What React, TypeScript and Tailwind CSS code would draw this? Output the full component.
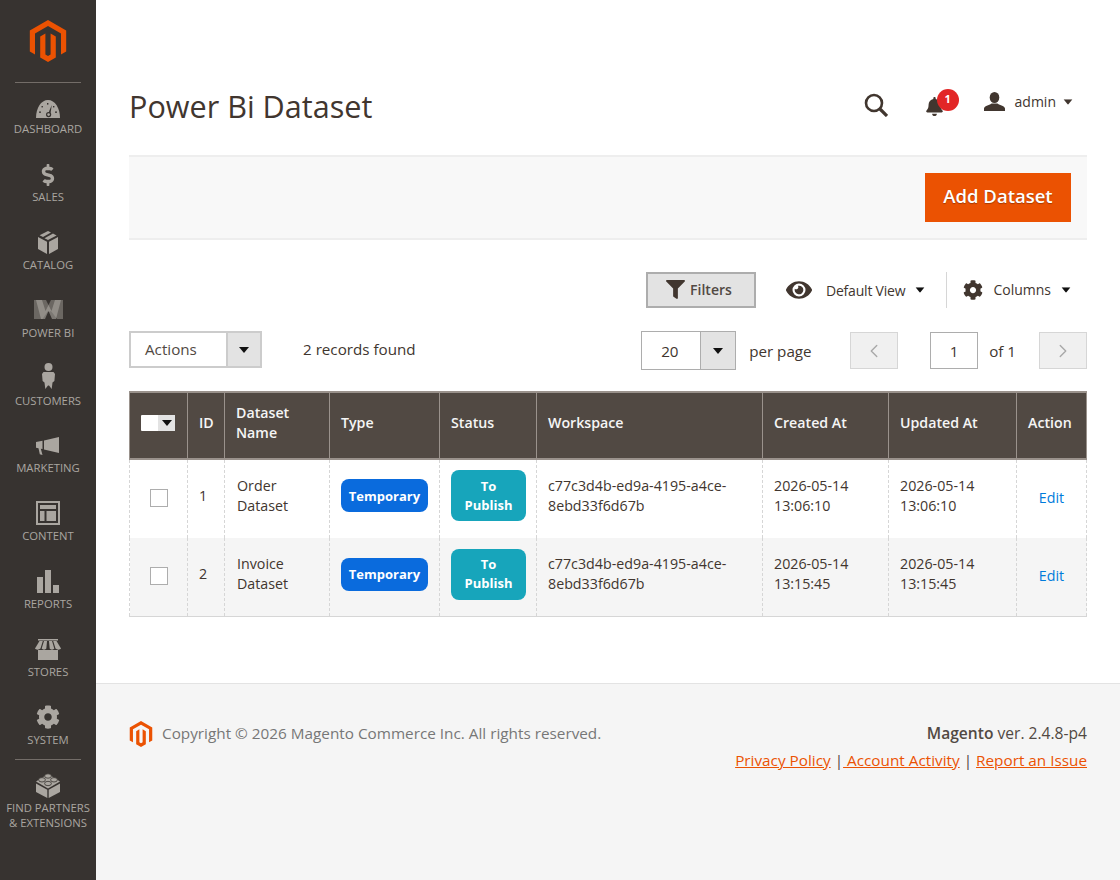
import React from 'react';
import { SiMagento } from 'react-icons/si';
import { FaDollarSign, FaCog, FaFilter, FaEye, FaBell } from 'react-icons/fa';
import { ChevronLeft, ChevronRight } from 'lucide-react';

const Caret = ({ className = '' }: { className?: string }) => (
  <svg viewBox="0 0 10 6" className={`h-[6px] w-[10px] ${className}`} fill="currentColor">
    <path d="M0 0h10L5 6z" />
  </svg>
);

const GaugeIcon = () => (
  <svg viewBox="0 0 24 18" className="h-[18px] w-[24px]">
    <path d="M0 18C0 8 5 0 12 0s12 8 12 18z" fill="currentColor" />
    <path d="M12 17l1.2-6 2.6-6-1 6.4-.8 5.6z" fill="#373330" />
    <circle cx="12.6" cy="14.6" r="2.6" fill="#373330" />
    <circle cx="12.6" cy="14.6" r="1.3" fill="currentColor" />
    <g fill="#373330">
      <rect x="3" y="11.5" width="2" height="1.3" />
      <rect x="19" y="11.5" width="2" height="1.3" />
      <rect x="5.5" y="6" width="1.4" height="1.4" />
      <rect x="11" y="3" width="1.4" height="1.6" />
      <rect x="17" y="6" width="1.4" height="1.4" />
    </g>
  </svg>
);

const BoxIcon = () => (
  <svg viewBox="0 0 20 23" className="h-[23px] w-[20px]" fill="currentColor">
    <path d="M10 0l3 1.6-8 4.4-3.4-1.7z" />
    <path d="M15 2.6l3.6 1.9-8.6 4.6-3.5-1.9z" />
    <path d="M0 6l9 4.8V23L0 18z" />
    <path d="M20 6v12l-9 5V10.800z" />
  </svg>
);

const PowerBiIcon = () => (
  <svg viewBox="0 0 29 19" className="h-[19px] w-[29px]" fill="currentColor">
    <path d="M0 0h12l2.500 5 2.500-5h12v19h-6l-6-8-2 1-1-1-5.500 8H0z" opacity="0.45" />
    <path d="M2 0h6l3.500 11 3-6 3 6L21 0h6l-5 19h-4l-3.500-8L11 19H7z" opacity="0.6" />
  </svg>
);

const PersonIcon = () => (
  <svg viewBox="0 0 13 26" className="h-[26px] w-[13px]" fill="currentColor">
    <circle cx="6.500" cy="4" r="4" />
    <path d="M1.500 9h10l1.500 2-.6 7-1.900 1.500-.8 6.500-2.700-3.500h-1l-2.700 3.500-.8-6.500L.600 18 0 11z" />
  </svg>
);

const MegaphoneIcon = () => (
  <svg viewBox="0 0 24 18" className="h-[18px] w-[24px]" fill="currentColor">
    <path d="M23 0v16L8 12.500V3.500z" />
    <path d="M0 5l6.500-1.300v8.300L4.800 11.700 6.500 18 3.800 17.300 2.500 11.200 0 10.700z" />
  </svg>
);

const ContentIcon = () => (
  <svg viewBox="0 0 24 24" className="h-[24px] w-[24px]" fill="currentColor">
    <path fillRule="evenodd" d="M0 0h24v24H0zM2 2v20h20V2z" />
    <rect x="4" y="4" width="16" height="4" />
    <rect x="4" y="10" width="4.500" height="10" />
    <rect x="10.500" y="10" width="9.500" height="10" />
  </svg>
);

const ReportsIcon = () => (
  <svg viewBox="0 0 22 23" className="h-[23px] w-[22px]" fill="currentColor">
    <rect x="0" y="7" width="6" height="16" />
    <rect x="8" y="0" width="6" height="23" />
    <rect x="16" y="15" width="6" height="8" />
  </svg>
);

const StoreIcon = () => (
  <svg viewBox="0 0 26 21" className="h-[21px] w-[26px]" fill="currentColor">
    <path d="M3 11h20v10H3z" />
    <path d="M3 0h20v1.500H3z" />
    <path d="M4.500 2h3.300L5.500 9.500C4 11 1 11 0 9.500z" />
    <path d="M9 2h3l-.7 7.500c-1 1.500-3.600 1.500-4.600 0z" />
    <path d="M14 2h3l2.300 7.500c-1 1.500-3.600 1.500-4.600 0z" />
    <path d="M18.200 2h3.300L26 9.500c-1 1.500-4 1.500-5.500 0z" />
  </svg>
);

const LegoIcon = () => (
  <svg viewBox="0 0 24 25" className="h-[25px] w-[24px]" fill="currentColor">
    <path d="M12 1l12 7.500-12 7-12-7z" />
    <path d="M0 10.500l11.300 6.300V25L0 19z" />
    <path d="M24 10.500v8.500l-11.300 6v-8.200z" />
    <g stroke="#373330" strokeWidth="0.8">
      <ellipse cx="12" cy="3" rx="3.400" ry="2.200" />
      <ellipse cx="6" cy="6.800" rx="3.400" ry="2.200" />
      <ellipse cx="18" cy="6.800" rx="3.400" ry="2.200" />
      <ellipse cx="12" cy="10.500" rx="3.400" ry="2.200" />
    </g>
  </svg>
);

const UserIcon = () => (
  <svg viewBox="0 0 21 19" className="h-[19px] w-[21px] text-[#41362f]" fill="currentColor">
    <ellipse cx="10.500" cy="5.500" rx="4.800" ry="5.500" />
    <path d="M0 19v-2.500c0-2.500 5-3 7.500-5h6c2.500 2 7.500 2.500 7.500 5V19z" />
  </svg>
);

const navItems = [
  { label: 'Dashboard', icon: <GaugeIcon />, iconBox: 'pt-[5px]' },
  { label: 'Sales', icon: <FaDollarSign size={22} />, iconBox: 'pt-[2px]' },
  { label: 'Catalog', icon: <BoxIcon />, iconBox: 'pt-[2px]' },
  { label: 'Power BI', icon: <PowerBiIcon />, iconBox: '' },
  { label: 'Customers', icon: <PersonIcon />, iconBox: 'pb-[4px]' },
  { label: 'Marketing', icon: <MegaphoneIcon />, iconBox: 'pt-[2px]' },
  { label: 'Content', icon: <ContentIcon />, iconBox: '' },
  { label: 'Reports', icon: <ReportsIcon />, iconBox: '' },
  { label: 'Stores', icon: <StoreIcon />, iconBox: '' },
  { label: 'System', icon: <FaCog size={24} />, iconBox: '' },
];

const rows = [
  { id: 1, name: 'Order Dataset', created: '2026-05-14 13:06:10' },
  { id: 2, name: 'Invoice Dataset', created: '2026-05-14 13:15:45' },
];

const columns = ['ID', 'Dataset Name', 'Type', 'Status', 'Workspace', 'Created At', 'Updated At', 'Action'];

const Sidebar = () => (
  <aside className="flex w-[96px] shrink-0 flex-col items-center bg-[#373330] text-[#aaa6a0]">
    <SiMagento className="mt-[20px] text-[#eb5202]" size={42} />
    <div className="mb-[8px] mt-[20px] h-px w-[66px] bg-[#736d68]" />
    {navItems.map((item) => (
      <div key={item.label} className="flex h-[67.9px] w-full flex-col items-center">
        <div className={`flex h-[30px] items-center justify-center ${item.iconBox}`}>{item.icon}</div>
        <span className="mt-[1px] text-[11.3px] uppercase leading-[14px]">{item.label}</span>
      </div>
    ))}
    <div className="mb-[13px] mt-[-11px] h-px w-[66px] bg-[#736d68]" />
    <LegoIcon />
    <span className="mt-[2px] text-center text-[11.3px] uppercase leading-[15px]">
      Find Partners
      <br />& Extensions
    </span>
  </aside>
);

const Header = () => (
  <div className="flex h-[155px] items-start justify-between pt-[87px]">
    <h1 className="text-[30.6px] font-normal leading-[38px] text-[#41362f]">Power Bi Dataset</h1>
    <div className="mr-[14px] mt-[4px] flex items-center">
      <svg viewBox="0 0 24 24" className="h-[24px] w-[24px] text-[#41362f]" fill="none" stroke="currentColor">
        <circle cx="10" cy="10" r="8" strokeWidth="2.600" />
        <path d="M16 16l7 7" strokeWidth="3.200" />
      </svg>
      <div className="relative ml-[37px] mr-[39px] h-[24px] w-[20px] pt-[4px]">
        <FaBell size={19} className="text-[#41362f]" />
        <span className="absolute left-[12px] top-[-4px] flex h-[22px] w-[22px] items-center justify-center rounded-full bg-[#e22626] text-[11px] font-bold text-white">
          1
        </span>
      </div>
      <div className="mb-[6px] flex items-center">
        <UserIcon />
        <span className="ml-[10px] text-[14px] text-[#41362f]">admin</span>
        <Caret className="ml-[7px] scale-90 text-[#41362f]" />
      </div>
    </div>
  </div>
);

const Toolbar = () => (
  <div className="flex h-[85px] items-center justify-end border-y-2 border-[#eeeeee] bg-[#f8f8f8] pr-[16px]">
    <button className="mb-[1px] h-[49px] w-[146px] bg-[#eb5202] pb-[2px] text-[18.5px] font-semibold text-white [text-shadow:0_1px_1px_rgba(0,0,0,0.3)]">
      Add Dataset
    </button>
  </div>
);

const GridControls = () => (
  <div className="mt-[32px] flex h-[36px] items-center justify-end">
    <button className="flex h-[36px] w-[110px] items-center justify-center gap-[5px] border-2 border-[#adadad] bg-[#e3e3e3] pb-[2px] pr-[4px] text-[14px] font-semibold text-[#514943]">
      <FaFilter size={19} className="text-[#41362f]" />
      Filters
    </button>
    <FaEye size={26} className="ml-[30px] text-[#41362f]" />
    <span className="ml-[14px] text-[14px] tracking-[-0.2px] text-[#41362f]">Default View</span>
    <Caret className="ml-[10px] scale-90 text-[#111]" />
    <div className="ml-[21px] h-[36px] w-px bg-[#d6d6d6]" />
    <FaCog size={20} className="ml-[16px] text-[#41362f]" />
    <span className="mb-[2px] ml-[10px] text-[14px] text-[#41362f]">Columns</span>
    <Caret className="ml-[10px] mr-[16px] scale-90 text-[#111]" />
  </div>
);

const PagerRow = () => (
  <div className="mt-[23px] flex h-[39px] items-center text-[15.2px] text-[#41362f]">
    <div className="mb-[2px] flex h-[37px] w-[133px] border-2 border-[#cccccc]">
      <span className="flex-1 pl-[14px] leading-[33px] text-[#514943]">Actions</span>
      <span className="flex w-[34px] items-center justify-center border-l-2 border-[#cccccc] bg-[#e3e3e3] text-[#111]">
        <Caret />
      </span>
    </div>
    <span className="mb-[2px] ml-[41px]">2 records found</span>
    <div className="ml-auto flex h-[39px] w-[95px] border border-[#adadad]">
      <span className="flex-1 pl-[19px] leading-[39px]">20</span>
      <span className="flex w-[35px] items-center justify-center border-l border-[#adadad] bg-[#e3e3e3] text-[#111]">
        <Caret />
      </span>
    </div>
    <span className="ml-[13px] mt-[2px] w-[63px] whitespace-nowrap">per page</span>
    <div className="ml-[38px] flex h-[37px] w-[48px] items-center justify-center border border-[#d6d6d6] bg-[#f0f0f0] text-[#a8a8a8]">
      <ChevronLeft size={22} strokeWidth={1.500} />
    </div>
    <div className="ml-[32px] flex h-[37px] w-[48px] items-center justify-center border border-[#adadad] bg-white pt-[2px]">1</div>
    <span className="ml-[11px] mt-[2px]">of 1</span>
    <div className="ml-[23px] flex h-[37px] w-[48px] items-center justify-center border border-[#d6d6d6] bg-[#f0f0f0] text-[#a8a8a8]">
      <ChevronRight size={22} strokeWidth={1.500} />
    </div>
  </div>
);

const thClass = 'border-x border-[#9a928c] px-[11px] pb-[5px] text-left text-[14.2px] font-semibold leading-[20px] text-[#f5f5f5]';
const tdClass = 'border-x border-dashed border-[#d6d6d6] px-[11px] text-[14.25px] leading-[20px] text-[#41362f]';

const DatasetTable = () => (
  <table className="mt-[21px] w-[957px] table-fixed border-collapse">
    <colgroup>
      <col className="w-[58px]" />
      <col className="w-[37px]" />
      <col className="w-[105px]" />
      <col className="w-[110px]" />
      <col className="w-[97px]" />
      <col className="w-[226px]" />
      <col className="w-[126px]" />
      <col className="w-[128px]" />
      <col className="w-[70px]" />
    </colgroup>
    <thead>
      <tr className="h-[67px] border-y-2 border-[#9a928c] bg-[#514943]">
        <th className={thClass}>
          <div className="flex h-[16px] w-[34px]">
            <span className="w-[17px] rounded-l-[1px] bg-white" />
            <span className="flex w-[17px] items-center justify-center bg-[#e3e3e3] text-[#111]">
              <Caret />
            </span>
          </div>
        </th>
        {columns.map((c) => (
          <th key={c} className={thClass}>
            {c}
          </th>
        ))}
      </tr>
    </thead>
    <tbody>
      {rows.map((r, i) => {
        // first row sits a pixel higher in its cell than the second
        const lift = i === 0 ? 'pb-[7px]' : 'pb-[5px]';
        return (
          <tr key={r.id} className={i % 2 ? 'h-[78px] border-b border-[#d6d6d6] bg-[#f5f5f5]' : 'h-[79px] bg-white'}>
            <td className={`${tdClass} pb-[2px]`}>
              <div className="mx-auto h-[18px] w-[18px] border border-[#adadad] bg-white" />
            </td>
            <td className={`${tdClass} ${lift}`}>{r.id}</td>
            <td className={`${tdClass} ${lift} pl-[12px]`}>{r.name}</td>
            <td className={`${tdClass} ${lift}`}>
              <span className="flex h-[33px] w-[87px] items-center justify-center rounded-[8px] bg-[#0a6bdd] text-[13px] font-bold text-white">
                Temporary
              </span>
            </td>
            <td className={`${tdClass} ${lift}`}>
              <span className="flex h-[51px] w-[75px] items-center justify-center rounded-[8px] bg-[#17a5bb] text-center text-[13px] font-bold leading-[19px] text-white">
                To
                <br />
                Publish
              </span>
            </td>
            <td className={`${tdClass} ${lift}`}>c77c3d4b-ed9a-4195-a4ce-8ebd33f6d67b</td>
            <td className={`${tdClass} ${lift}`}>{r.created}</td>
            <td className={`${tdClass} ${lift}`}>{r.created}</td>
            <td className={`${tdClass} pb-[2px] text-center`}>
              <a className="text-[#007bdb]">Edit</a>
            </td>
          </tr>
        );
      })}
    </tbody>
  </table>
);

const Footer = () => (
  <footer className="flex flex-1 items-start justify-between border-t border-[#e3e3e3] bg-[#f5f5f5] pl-[33px] pr-[34px] pt-[38px]">
    <div className="mt-[-1px] flex items-center">
      <SiMagento className="ml-[-1px] text-[#eb5202]" size={26} />
      <span className="mb-[2px] ml-[8px] text-[15.3px] text-[#777777]">Copyright © 2026 Magento Commerce Inc. All rights reserved.</span>
    </div>
    <div className="text-right text-[15.3px] text-[#514943]">
      <div className="mt-[1px] text-[15.6px] leading-[20px]">
        <span className="font-semibold">Magento</span> ver. 2.4.8-p4
      </div>
      <div className="mt-[7px] whitespace-pre leading-[20px]">
        <a className="text-[#eb5202] underline">Privacy Policy</a>
        {' |'}
        <a className="text-[#eb5202] underline"> Account Activity</a>
        {' | '}
        <a className="text-[#eb5202] underline">Report an Issue</a>
      </div>
    </div>
  </footer>
);

export default function App() {
  return (
    <div className="flex h-[880px] w-[1120px] overflow-hidden bg-white font-['Open_Sans',sans-serif]">
      <Sidebar />
      <main className="flex flex-1 flex-col">
        <div className="h-[683px] pl-[33px] pr-[34px]">
          <Header />
          <Toolbar />
          <GridControls />
          <PagerRow />
          <DatasetTable />
        </div>
        <Footer />
      </main>
    </div>
  );
}
